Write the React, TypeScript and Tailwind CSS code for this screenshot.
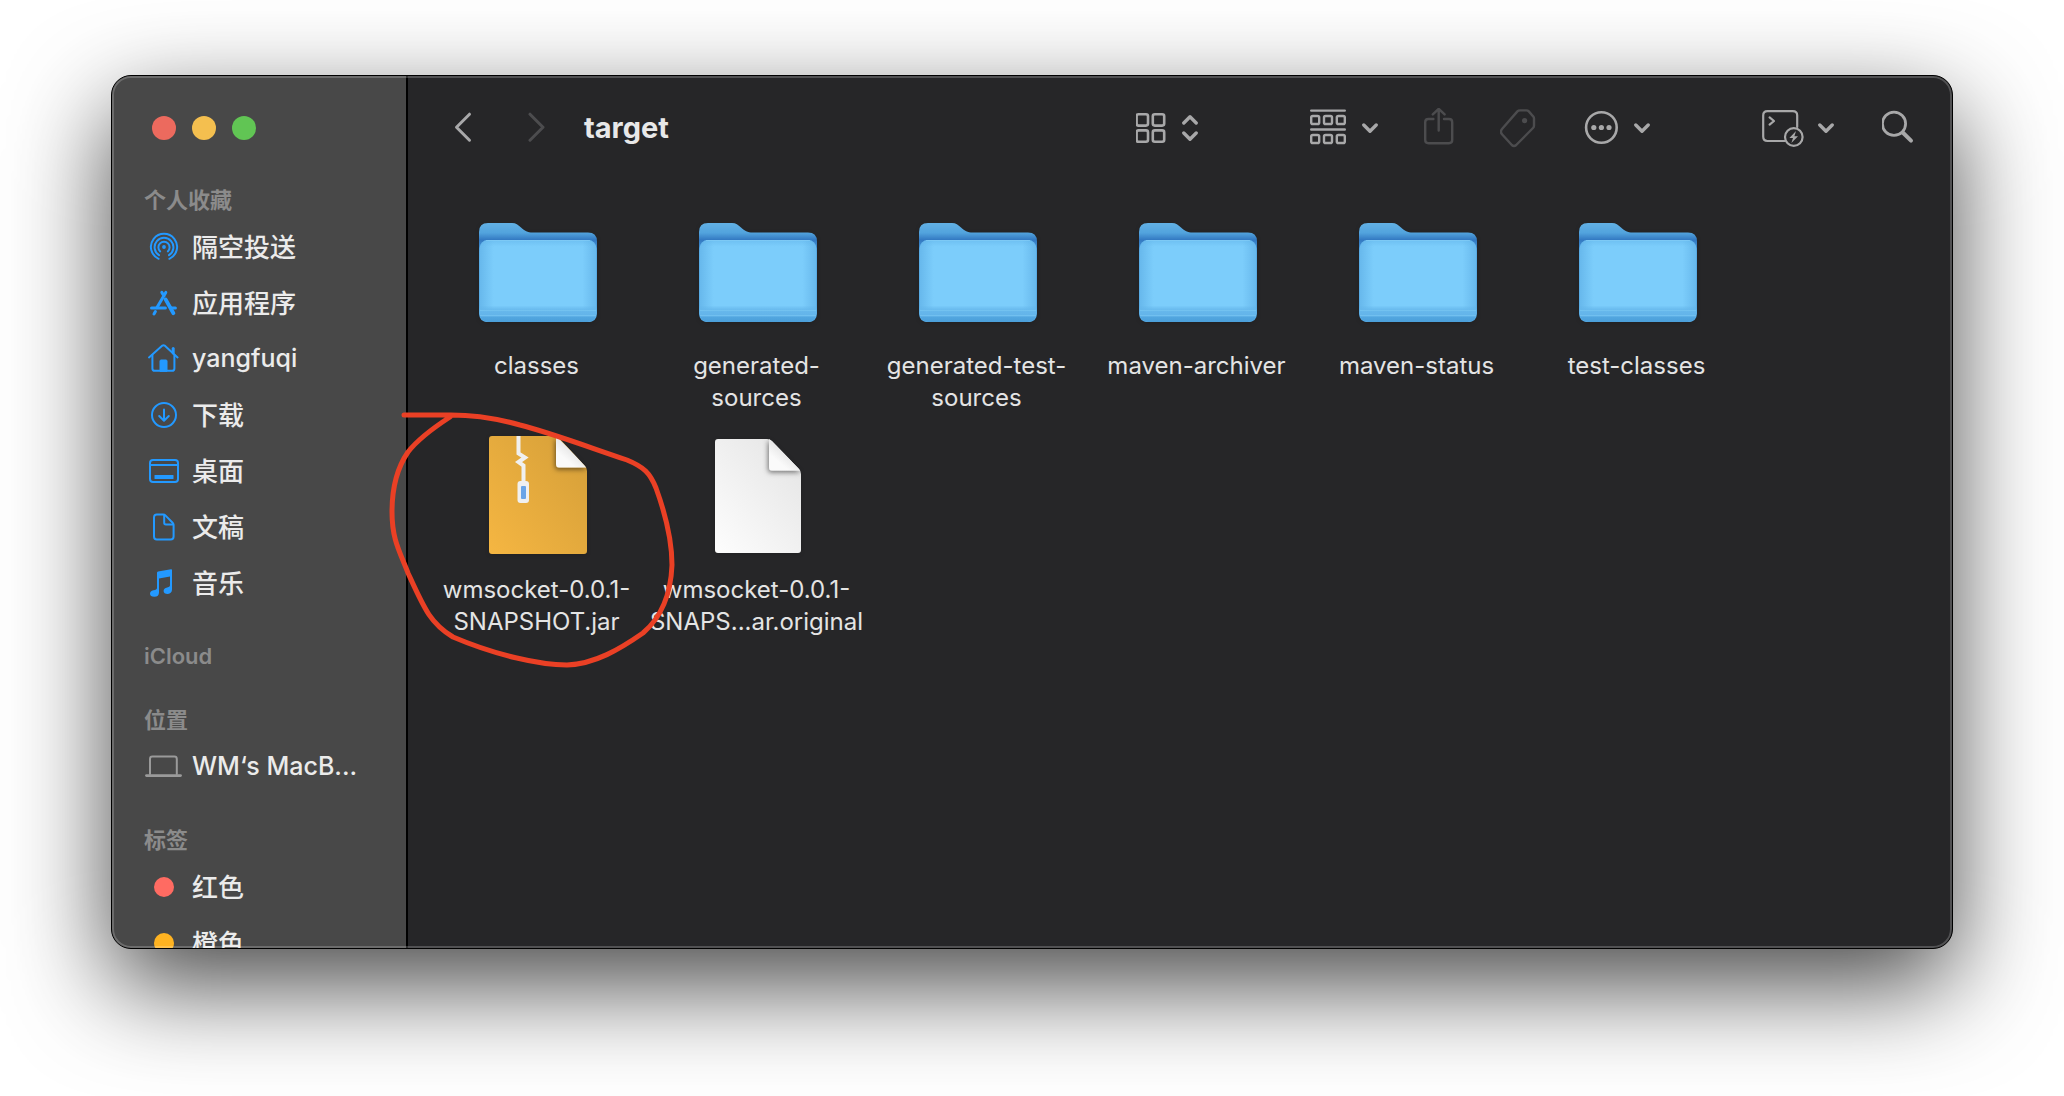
import type { ReactNode } from "react";

const favorites = [
  { label: '隔空投送', icon: <AirDropIcon /> },
  { label: '应用程序', icon: <AppsIcon /> },
  { label: 'yangfuqi', icon: <HomeIcon />, latin: true },
  { label: '下载', icon: <DownloadIcon /> },
  { label: '桌面', icon: <DesktopIcon /> },
  { label: '文稿', icon: <DocumentIcon /> },
  { label: '音乐', icon: <MusicIcon /> }
];

const files = [
  { lines: ['classes'], kind: 'folder' },
  { lines: ['generated-', 'sources'], kind: 'folder' },
  { lines: ['generated-test-', 'sources'], kind: 'folder' },
  { lines: ['maven-archiver'], kind: 'folder' },
  { lines: ['maven-status'], kind: 'folder' },
  { lines: ['test-classes'], kind: 'folder' },
  { lines: ['wmsocket-0.0.1-', 'SNAPSHOT.jar'], kind: 'jar' },
  { lines: ['wmsocket-0.0.1-', 'SNAPS...ar.original'], kind: 'blank' }
];

/* Sidebar icons, all on a 40x40 canvas */
function SideIcon({ children }: { children: ReactNode }) {
  return (
    <svg viewBox="0 0 40 40" className="size-10 shrink-0" fill="none" stroke="currentColor" strokeWidth="2" strokeLinecap="round" strokeLinejoin="round" aria-hidden="true">
      {children}
    </svg>
  );
}

function AirDropIcon() {
  return (
    <SideIcon>
      <path d="M14.6 31.8A13.1 13.1 0 1 1 25.4 31.8" />
      <path d="M15 28.2A9.4 9.4 0 1 1 25 28.2" />
      <path d="M16.2 24.4A5.6 5.6 0 1 1 23.8 24.4" />
      <circle cx="20" cy="20" r="1.9" fill="currentColor" stroke="none" />
    </SideIcon>
  );
}

function AppsIcon() {
  return (
    <SideIcon>
      <g strokeWidth="3">
        <path d="M21.8 9.4L13 24.6M17.8 9.4L20 13" />
        <path d="M21.6 16.4L29.4 30.2" strokeWidth="3.8" />
        <path d="M7.5 25H21.4M27 25H31.4M11.4 28.6L10 31" />
      </g>
    </SideIcon>
  );
}

function HomeIcon() {
  return (
    <SideIcon>
      <path d="M5 18.4L18.4 6.6Q19.5 5.8 20.6 6.6L33.6 18.4" />
      <path d="M8.4 16V29.4Q8.4 31.8 10.8 31.8H28Q30.4 31.8 30.4 29.4V16" />
      <path d="M29.2 9.6V14" strokeWidth="3" />
      <path d="M16 32V22Q16 21 17 21H22Q23 21 23 22V32Z" fill="currentColor" strokeWidth="1" />
    </SideIcon>
  );
}

function DownloadIcon() {
  return (
    <SideIcon>
      <circle cx="20" cy="20" r="12" />
      <path d="M20 14.4V25.6M15.2 21L20 25.8L24.8 21" />
    </SideIcon>
  );
}

function DesktopIcon() {
  return (
    <SideIcon>
      <rect x="6" y="9" width="28" height="22" rx="3" />
      <path d="M6 14H34" />
      <rect x="10.5" y="24" width="19" height="4" rx="0.6" fill="currentColor" stroke="none" />
    </SideIcon>
  );
}

function DocumentIcon() {
  return (
    <SideIcon>
      <path d="M12.8 7.6H19.2Q20.6 7.6 21.6 8.6L28.6 15.8Q29.6 16.8 29.6 18.2V29.6Q29.6 32.6 26.6 32.6H12.8Q10 32.6 10 29.6V10.4Q10 7.6 12.8 7.6Z" />
      <path d="M20.2 8V15.8Q20.2 17.4 21.8 17.4H29.2" />
    </SideIcon>
  );
}

function MusicIcon() {
  return (
    <SideIcon>
      <path d="M13 9.8Q13 8.8 14 8.6L27 6.2Q28 6 28 7V26.6Q28 30.6 23.8 31Q19.6 31 19.6 28Q19.6 25.2 23.2 24.6Q26 24.2 26 22.6V13.4L15 15.6V29.4Q15 33.6 10.4 33.8Q6 33.8 6 30.6Q6 28 9.4 27.2Q13 26.8 13 25Z" fill="currentColor" stroke="none" />
    </SideIcon>
  );
}

function LaptopIcon() {
  return (
    <SideIcon>
      <path d="M6 27V12Q6 9.6 8.4 9.6H30.4Q32.8 9.6 32.8 12V27" />
      <path d="M2.4 28.6H36.6" strokeWidth="2.6" />
    </SideIcon>
  );
}

/* File icons */
function FolderIcon() {
  return (
    <svg viewBox="0 -1 118 100" className="w-[118px] h-[100px] drop-shadow-sm" aria-hidden="true">
      <defs>
        <linearGradient id="folder-back" x1="0" y1="0" x2="0" y2="1">
          <stop offset="0" stopColor="#62b0e4" />
          <stop offset="0.1" stopColor="#52a3dd" />
          <stop offset="0.17" stopColor="#3379c2" />
          <stop offset="0.3" stopColor="#4a9edb" />
        </linearGradient>
        <linearGradient id="folder-front">
          <stop offset="0" stopColor="#67b8ec" />
          <stop offset="0.12" stopColor="#7ccdfb" />
          <stop offset="0.88" stopColor="#7ccdfb" />
          <stop offset="1" stopColor="#67b8ec" />
        </linearGradient>
        <linearGradient id="folder-lip" x1="0" y1="0" x2="0" y2="1">
          <stop offset="0" stopColor="#5fb2e8" stopOpacity="0.5" />
          <stop offset="0.08" stopColor="#5fb2e8" stopOpacity="0" />
          <stop offset="0.8" stopColor="#5fb2e8" stopOpacity="0" />
          <stop offset="0.86" stopColor="#67b8ec" />
          <stop offset="0.93" stopColor="#62b3e9" />
          <stop offset="0.94" stopColor="#52a6df" />
          <stop offset="1" stopColor="#4b9fda" />
        </linearGradient>
      </defs>
      <path d="M0 9Q0 0 9 0H33C37 0 39 2 42 4.4C46 7.6 48 9.4 54 9.4H109Q118 9.4 118 18.4V90Q118 99 109 99H9Q0 99 0 90Z" fill="url(#folder-back)" />
      <rect x="0.5" y="17" width="117" height="82" rx="8.5" fill="url(#folder-front)" />
      <rect x="0.5" y="17" width="117" height="82" rx="8.5" fill="url(#folder-lip)" />
      <path d="M1 87.5H117M1 92.5H117" stroke="#7cc8f4" strokeOpacity="0.6" />
      <path d="M7 17.5H111" stroke="#83cdf7" strokeOpacity="0.7" />
    </svg>
  );
}

function JarIcon() {
  return (
    <svg viewBox="0 0 98 120" className="w-[98px] h-[120px] drop-shadow-sm" aria-hidden="true">
      <defs>
        <linearGradient id="jar-body" x1="0" y1="1" x2="0.9" y2="0.2">
          <stop offset="0" stopColor="#f5b642" />
          <stop offset="1" stopColor="#d9a23a" />
        </linearGradient>
        <linearGradient id="fold" x1="0.8" y1="0.2" x2="0.2" y2="0.9">
          <stop offset="0.3" stopColor="#e2e2e2" />
          <stop offset="0.8" stopColor="#fafafa" />
        </linearGradient>
        <filter id="fold-shadow" x="-50%" y="-50%" width="200%" height="200%">
          <feDropShadow dx="-1" dy="2" stdDeviation="2.5" floodOpacity="0.5" />
        </filter>
        <clipPath id="jar-clip">
          <path d="M3 0H65Q68 0 70 2L96 30Q98 32 98 35V115Q98 118 95 118H3Q0 118 0 115V3Q0 0 3 0Z" />
        </clipPath>
      </defs>
      <g clipPath="url(#jar-clip)">
        <rect width="98" height="118" fill="url(#jar-body)" />
        <path d="M67 0V28Q67 31.5 70 31.5H99Z" fill="url(#fold)" filter="url(#fold-shadow)" />
        <path d="M29.5 0V17.5L36 21.5L29.5 26L34.5 29.5V47" fill="none" stroke="#f0f0f0" strokeWidth="4" />
      </g>
      <rect x="28.5" y="45" width="11.5" height="22" rx="3" fill="#f0f0f0" />
      <rect x="32" y="50" width="5" height="13" rx="1" fill="#6ba5e7" />
    </svg>
  );
}

function BlankFileIcon() {
  return (
    <svg viewBox="0 0 86 114" className="w-[86px] h-[114px] drop-shadow-sm" aria-hidden="true">
      <defs>
        <linearGradient id="blank-body" x1="0.1" y1="1" x2="0.9" y2="0.1">
          <stop offset="0" stopColor="#fcfcfc" />
          <stop offset="1" stopColor="#e6e6e6" />
        </linearGradient>
        <clipPath id="blank-clip">
          <path d="M3 0H52Q55 0 57 2L84 30Q86 32 86 35V111Q86 114 83 114H3Q0 114 0 111V3Q0 0 3 0Z" />
        </clipPath>
      </defs>
      <g clipPath="url(#blank-clip)">
        <rect width="86" height="114" fill="url(#blank-body)" />
        <path d="M54 -1V28Q54 31.5 57 31.5H87Z" fill="url(#fold)" filter="url(#fold-shadow)" />
      </g>
    </svg>
  );
}

/* Toolbar icons */
function ChevronDown() {
  return (
    <svg viewBox="0 0 16 40" className="w-4 h-10" fill="none" stroke="currentColor" strokeWidth="3.4" strokeLinecap="round" strokeLinejoin="round" aria-hidden="true">
      <path d="M1.8 17L8 23.2L14.2 17" />
    </svg>
  );
}

function Section({ title, children }: { title: string; children?: ReactNode }) {
  return (
    <section className="mb-[26px]">
      <h2 className="h-[38px] leading-[38px] text-[22px] font-semibold text-[#8b8b8b]">{title}</h2>
      {children}
    </section>
  );
}

function SideItem({ label, icon, latin }: { label: string; icon: ReactNode; latin?: boolean }) {
  return (
    <li>
      <a href="#" className="flex items-center gap-2 h-14 font-medium whitespace-nowrap text-[#ebebeb]">
        {icon}
        <span className={latin ? 'text-[25px]' : 'text-[26px]'}>{label}</span>
      </a>
    </li>
  );
}

function Sidebar() {
  return (
    <aside className="w-[296px] shrink-0 overflow-hidden bg-[#484848] border-r-2 border-black pl-8">
      <div className="flex items-start gap-4 h-[105px] pt-10 pl-2">
        <button aria-label="Close" className="size-6 rounded-full bg-[#ec6a5e]" />
        <button aria-label="Minimize" className="size-6 rounded-full bg-[#f4bf4f]" />
        <button aria-label="Zoom" className="size-6 rounded-full bg-[#61c554]" />
      </div>
      <nav>
        <Section title="个人收藏">
          <ul>
            {favorites.map((item) => (
              <SideItem key={item.label} label={item.label} latin={item.latin} icon={<span className="text-[#2399ff]">{item.icon}</span>} />
            ))}
          </ul>
        </Section>
        <Section title="iCloud" />
        <Section title="位置">
          <ul>
            <SideItem latin label="WM‘s MacB..." icon={<span className="text-[#9a9a9a]"><LaptopIcon /></span>} />
          </ul>
        </Section>
        <Section title="标签">
          <ul>
            <SideItem label="红色" icon={<span className="size-5 mx-[10px] rounded-full bg-[#ff6b62]" />} />
            <SideItem label="橙色" icon={<span className="size-5 mx-[10px] rounded-full bg-[#ffb321]" />} />
          </ul>
        </Section>
      </nav>
    </aside>
  );
}

function Toolbar() {
  return (
    <header className="flex items-center h-[104px] pl-[46px] pr-[38px] text-[#a8a8a9]">
      <button aria-label="Back">
        <svg viewBox="0 0 18 32" className="w-[18px] h-8" fill="none" stroke="currentColor" strokeWidth="3" strokeLinecap="round" strokeLinejoin="round">
          <path d="M15.5 2.2L2.5 15.2L15.5 28.2" />
        </svg>
      </button>
      <button aria-label="Forward" disabled className="ml-14 text-[#4c4c4e]">
        <svg viewBox="0 0 18 32" className="w-[18px] h-8" fill="none" stroke="currentColor" strokeWidth="3" strokeLinecap="round" strokeLinejoin="round">
          <path d="M2 2.2L15 15.2L2 28.2" />
        </svg>
      </button>
      <h1 className="ml-[38px] text-[29px] font-bold text-[#e8e8e8]">target</h1>

      <div className="ml-auto flex items-center gap-[112px]">
        <button aria-label="View as icons" className="flex items-center gap-4">
          <svg viewBox="0 0 30 40" className="w-[30px] h-10" fill="none" stroke="currentColor" strokeWidth="2.6">
            <rect x="0.6" y="6.2" width="11.4" height="11.4" rx="2" />
            <rect x="16.8" y="6.2" width="11.4" height="11.4" rx="2" />
            <rect x="0.6" y="22.4" width="11.4" height="11.4" rx="2" />
            <rect x="16.8" y="22.4" width="11.4" height="11.4" rx="2" />
          </svg>
          <svg viewBox="0 0 16 40" className="w-4 h-10" fill="none" stroke="currentColor" strokeWidth="3.4" strokeLinecap="round" strokeLinejoin="round">
            <path d="M1.8 15L8 8.8L14.2 15M1.8 25L8 31.2L14.2 25" />
          </svg>
        </button>

        <div className="flex items-center gap-[46px]">
          <button aria-label="Group" className="flex items-center gap-4">
            <svg viewBox="0 0 36 40" className="w-9 h-10" fill="none" stroke="currentColor" strokeWidth="2.4">
              <path d="M1.2 2.6H34.8M1.2 21.5H34.8" strokeLinecap="round" />
              {[1.2, 14, 26.8].map((x) => (
                <g key={x}>
                  <rect x={x} y="8" width="8" height="8" rx="1.6" />
                  <rect x={x} y="27" width="8" height="8" rx="1.6" />
                </g>
              ))}
            </svg>
            <ChevronDown />
          </button>
          <button aria-label="Share" disabled className="text-[#4c4c4e]">
            <svg viewBox="0 0 30 40" className="w-[30px] h-10" fill="none" stroke="currentColor" strokeWidth="2.4" strokeLinecap="round" strokeLinejoin="round">
              <path d="M9.4 11H4.4Q1.2 11 1.2 14.2V32Q1.2 35.2 4.4 35.2H25Q28.2 35.2 28.2 32V14.2Q28.2 11 25 11H20" />
              <path d="M14.7 22.6V1.4M8.8 6.4L14.7 0.8L20.6 6.4" />
            </svg>
          </button>
          <button aria-label="Tags" disabled className="text-[#4c4c4e]">
            <svg viewBox="1 0 38 40" className="w-[38px] h-10" fill="none" stroke="currentColor" strokeWidth="2.4" strokeLinejoin="round">
              <path d="M18.4 3.4Q19.4 2.4 21 2.4H27.4Q28.8 2.4 29.8 3.4L34 8.2Q35 9.2 35 10.6V17.4Q35 19 34 20L17.2 37Q15 39 12.8 37L3 26.2Q0.8 24 3 21Z" />
              <circle cx="25.6" cy="12.6" r="2.6" fill="currentColor" stroke="none" />
            </svg>
          </button>
          <button aria-label="More" className="flex items-center gap-4">
            <svg viewBox="0 0 34 40" className="w-[34px] h-10" fill="none" stroke="currentColor" strokeWidth="2.6">
              <circle cx="17.4" cy="19.5" r="15.3" />
              <g fill="currentColor" stroke="none">
                <circle cx="9.8" cy="19.5" r="2.6" />
                <circle cx="17.4" cy="19.5" r="2.6" />
                <circle cx="25" cy="19.5" r="2.6" />
              </g>
            </svg>
            <ChevronDown />
          </button>
        </div>

        <div className="flex items-center gap-12">
          <button aria-label="Open in terminal" className="flex items-center gap-[14px]">
            <svg viewBox="0 0 42 40" className="w-[42px] h-10" fill="none" stroke="currentColor" strokeWidth="2.2" strokeLinecap="round" strokeLinejoin="round">
              <path d="M22.6 33H5.4Q1.2 33 1.2 28.6V7.6Q1.2 3.2 5.4 3.2H30.8Q35.2 3.2 35.2 7.6V19" />
              <path d="M7.6 9.4L12 13L7.6 16.6" />
              <circle cx="31.8" cy="29" r="8.8" />
              <path d="M34 23L27.4 30H31L29.4 35L36 28.2H32.4Z" fill="currentColor" stroke="none" />
            </svg>
            <ChevronDown />
          </button>
          <button aria-label="Search">
            <svg viewBox="0 0 32 40" className="w-8 h-10" fill="none" stroke="currentColor" strokeLinecap="round">
              <circle cx="12" cy="15.8" r="11.6" strokeWidth="2.8" />
              <path d="M21 24.8L29 32.6" strokeWidth="4" />
            </svg>
          </button>
        </div>
      </div>
    </header>
  );
}

function FileItem({ lines, kind }: { lines: string[]; kind: string }) {
  return (
    <li className="flex flex-col items-center">
      <div className="flex items-center justify-center h-32">
        {kind === 'folder' && <FolderIcon />}
        {kind === 'jar' && <JarIcon />}
        {kind === 'blank' && <BlankFileIcon />}
      </div>
      <p className="mt-[14px] pr-[3px] text-2xl leading-8 text-center whitespace-nowrap text-[#e4e4e4]">
        {lines.map((line) => (
          <span key={line} className="block">{line}</span>
        ))}
      </p>
    </li>
  );
}

export default function App() {
  return (
    <div className="flex h-screen min-h-[600px] bg-white px-[111px] pt-[75px] pb-[147px] font-['Inter','Noto_Sans_CJK_SC',sans-serif]">
      <div className="relative flex flex-1 min-w-0 overflow-hidden rounded-[20px] border border-black bg-[#262628] shadow-[0_36px_100px_rgba(0,0,0,0.72)]">
        <Sidebar />
        <main className="flex-1 min-w-0">
          <Toolbar />
          <ul className="grid grid-cols-[repeat(auto-fill,220px)] auto-rows-[224px] pl-5 pt-7">
            {files.map((file) => (
              <FileItem key={file.lines.join('')} {...file} />
            ))}
          </ul>
        </main>

        {/* Hand-drawn ring around the jar */}
        <svg viewBox="388 408 292 264" className="absolute left-[276px] top-[332px] w-[292px] h-[264px] pointer-events-none" fill="none" stroke="#ea4025" strokeWidth="5" strokeLinecap="round" strokeLinejoin="round" aria-hidden="true">
          <path d="M404 415H451C475 415 495 418 520 425C548 432 580 444 627 460C644 467 650 473 656 488C664 510 672 540 672 565C671 590 664 615 643 633C620 649 595 664 567 665C540 665 495 655 453 637C430 623 424 608 408 573C400 552 392 540 392 512C392 490 397 468 408 452C415 443 430 430 450 417" />
        </svg>

        {/* Light rim inside the window edge */}
        <div className="absolute inset-0 rounded-[19px] border-2 border-white/20 pointer-events-none" />
      </div>
    </div>
  );
}
